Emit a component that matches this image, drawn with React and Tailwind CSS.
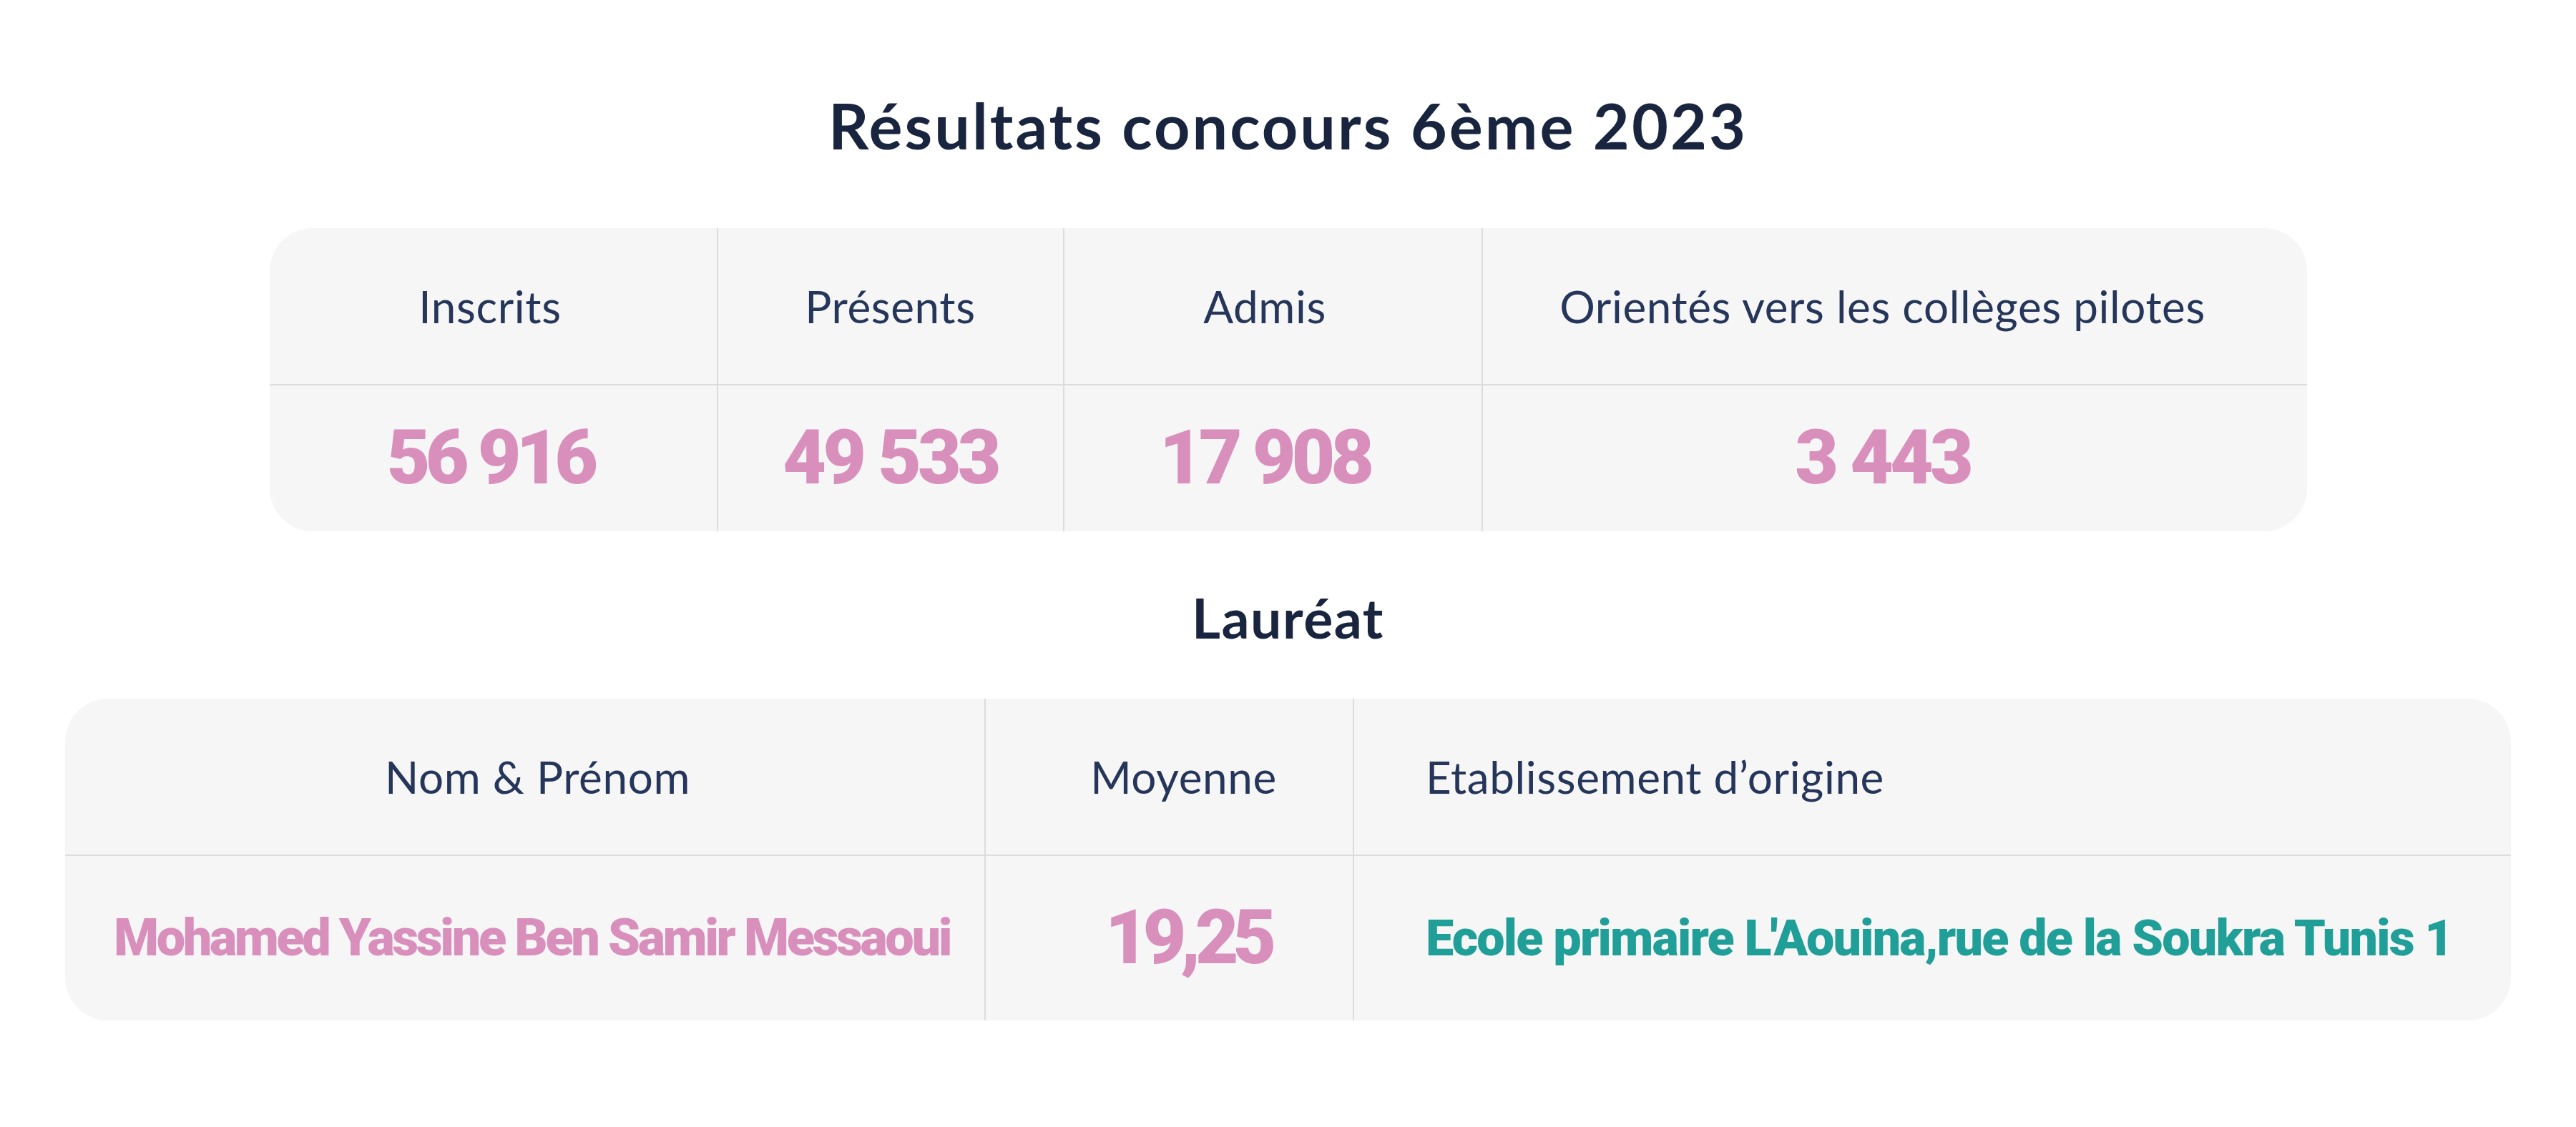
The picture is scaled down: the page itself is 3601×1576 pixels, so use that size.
import React from 'react';

const stats = [
  { label: 'Inscrits', value: '56 916', pad: 'pr-[8px]', track: 'tracking-[-7px]' },
  { label: 'Présents', value: '49 533', pad: '', track: 'tracking-[-5px]' },
  { label: 'Admis', value: '17 908', pad: 'pr-[22px]', track: 'tracking-[-6px]' },
  { label: 'Orientés vers les collèges pilotes', value: '3 443', pad: 'pr-[34px]', track: 'tracking-[-5px]' },
];

const heading = { fontFamily: 'Lato, "Open Sans", sans-serif' };
const digits = { fontFamily: 'Roboto, "Liberation Sans", sans-serif' };

const App = () => {
  return (
    <div className="min-h-screen w-full bg-white flex flex-col items-center pt-[131px]" style={heading}>
      <h1 className="text-[88px] leading-none font-bold tracking-[3px] text-[#19253f]">Résultats concours 6ème 2023</h1>

      {/* Stats */}
      <div className="mt-[100px] grid grid-cols-[627px_484px_585px_1152px] rounded-[60px] bg-[#f6f6f6] overflow-hidden">
        {stats.map((s, i) => (
          <div
            key={s.label}
            className={`h-[220px] flex items-center justify-center border-b-2 border-[#dcdcdc] text-[62px] tracking-[0.6px] text-[#25365a] ${s.pad} ${i < 3 ? 'border-r-2' : ''}`}
          >
            {s.label}
          </div>
        ))}
        {stats.map((s, i) => (
          <div
            key={s.value}
            className={`h-[204px] flex items-center justify-center border-[#dcdcdc] text-[105px] font-black text-[#d98fbb] ${s.track} ${s.pad} ${i < 3 ? 'border-r-2' : ''}`}
            style={digits}
          >
            {s.value}
          </div>
        ))}
      </div>

      <h2 className="mt-[82px] text-[77px] leading-none font-bold tracking-[1.5px] text-[#19253f]">Lauréat</h2>

      {/* Laureate */}
      <div className="mt-[75px] grid grid-cols-[1287px_515px_1617px] rounded-[60px] bg-[#f6f6f6] overflow-hidden">
        <div className="h-[220px] flex items-center justify-center pl-[36px] border-b-2 border-r-2 border-[#dcdcdc] text-[62px] tracking-[0.6px] text-[#25365a]">
          Nom &amp; Prénom
        </div>
        <div className="h-[220px] flex items-center justify-center pl-[40px] border-b-2 border-r-2 border-[#dcdcdc] text-[62px] tracking-[0.6px] text-[#25365a]">
          Moyenne
        </div>
        <div className="h-[220px] flex items-center pl-[100px] border-b-2 border-[#dcdcdc] text-[62px] tracking-[0.6px] text-[#25365a]">
          Etablissement d’origine
        </div>
        <div className="h-[230px] flex items-center justify-center pl-[20px] whitespace-nowrap border-r-2 border-[#dcdcdc] text-[72px] font-black tracking-[-3.4px] text-[#d98fbb]" style={digits}>
          Mohamed Yassine Ben Samir Messaoui
        </div>
        <div className="h-[230px] flex items-center justify-center pl-[52px] border-r-2 border-[#dcdcdc] text-[105px] font-black tracking-[-8px] text-[#d98fbb]" style={digits}>
          19,25
        </div>
        <div className="h-[230px] flex items-center pl-[100px] whitespace-nowrap text-[70px] font-black tracking-[-1.8px] text-[#209e98]" style={digits}>
          Ecole primaire L'Aouina,rue de la Soukra Tunis 1
        </div>
      </div>
    </div>
  );
};

export default App;
